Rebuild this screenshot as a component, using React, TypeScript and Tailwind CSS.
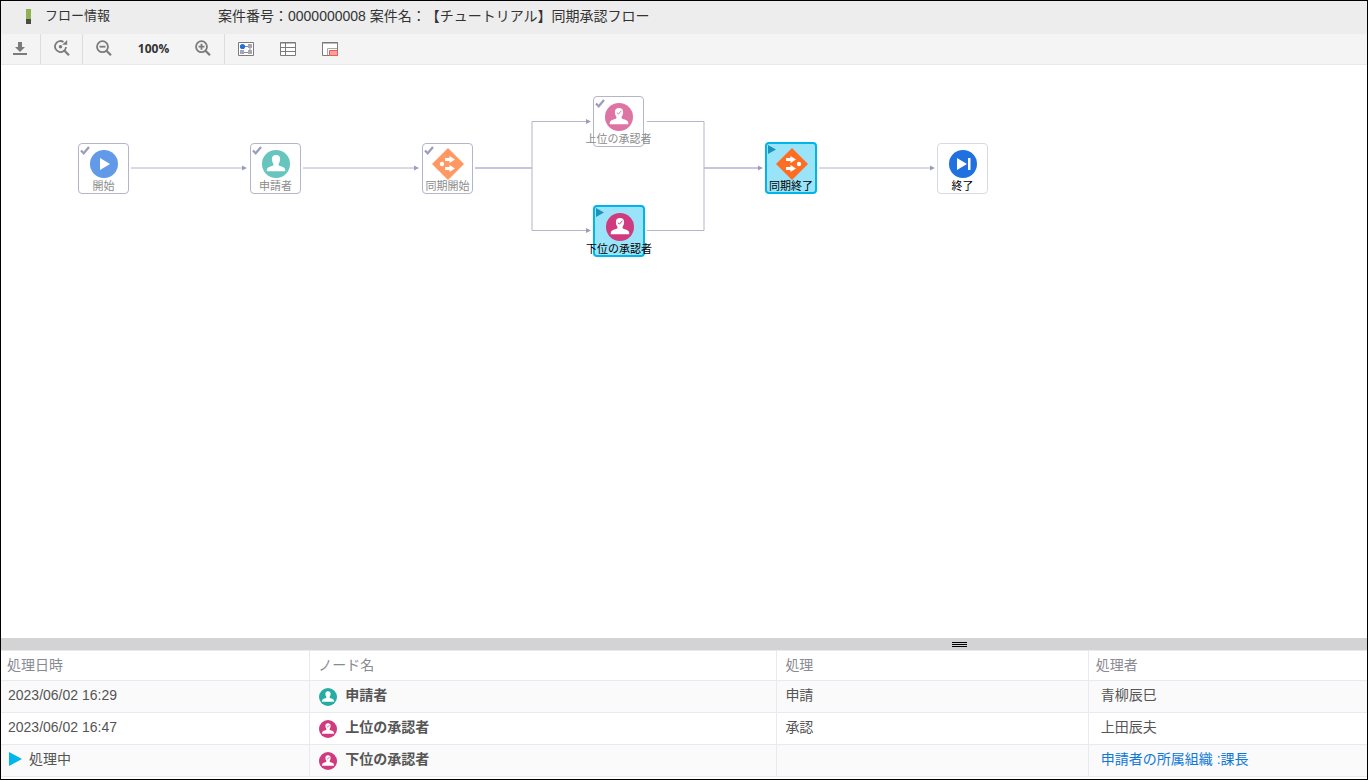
import React from "react";

type IconKind = "start" | "user" | "approver" | "split" | "join" | "end";
type NodeState = "done" | "active" | "waiting";

function Person({ check = false }: { check?: boolean }) {
  return (
    <>
      <path
        d="M14 5c2.700 0 4.100 1.500 4.100 4 0 2-.6 3.700-1.500 4.800v1.500c1.200 1 5 1.300 6.100 2.900.5.8.6 1.900.6 3.100H4.700c0-1.200.1-2.300.6-3.100 1.100-1.600 4.900-1.900 6.100-2.900v-1.500c-.9-1.100-1.500-2.800-1.500-4.800 0-2.500 1.400-4 4.100-4z"
        fill="#fff"
      />
      {check && <path d="M11.800 9.600l1.600 1.500 2.900-3.300" fill="none" stroke="#d03a7e" strokeWidth="1" />}
    </>
  );
}

function NodeIcon({ kind, className }: { kind: IconKind; className: string }) {
  return (
    <svg viewBox="0 0 28 28" className={className} aria-hidden="true">
      {kind === "start" && (
        <>
          <circle cx="14" cy="14" r="14" fill="#2070e0" />
          <path d="M10 8l10 6-10 6z" fill="#fff" />
        </>
      )}
      {kind === "user" && (
        <>
          <circle cx="14" cy="14" r="14" fill="#27aca4" />
          <Person />
        </>
      )}
      {kind === "approver" && (
        <>
          <circle cx="14" cy="14" r="14" fill="#d03a7e" />
          <Person check />
        </>
      )}
      {kind === "end" && (
        <>
          <circle cx="14" cy="14" r="14" fill="#2070e0" />
          <path d="M8 8l10 6-10 6zM19 8h2.500v12H19z" fill="#fff" />
        </>
      )}
    </svg>
  );
}

function BranchIcon({ join, className }: { join: boolean; className: string }) {
  return (
    <svg viewBox="0 0 32 32" className={className} aria-hidden="true">
      <path d="M16 0l16 16-16 16L0 16z" fill="#ff6d22" />
      <circle cx={join ? 23 : 10} cy="16" r="2.200" fill="#fff" />
      <g transform={join ? "translate(-3 0)" : "translate(0 0)"} fill="#fff">
        <path d="M13 10h4.500V8l5.500 3.500-5.500 3.500v-2H13z" />
        <path d="M13 19h4.500v-2l5.500 3.500-5.500 3.500v-2H13z" />
      </g>
    </svg>
  );
}

const boxStyles: Record<NodeState, string> = {
  done: "h-[51px] w-[51px] border border-[#b4b4cb] bg-white",
  active: "h-[52px] w-[52px] border-2 border-[#00b4ec] bg-[#9ae4f9]",
  waiting: "h-[51px] w-[51px] border border-[#d9d9e6] bg-white",
};

const iconStyles: Record<NodeState, string> = {
  done: "ml-px opacity-70",
  active: "ml-0.5",
  waiting: "ml-px",
};

interface FlowNodeProps {
  label: string;
  kind: IconKind;
  state: NodeState;
  place: string;
}

function FlowNode({ label, kind, state, place }: FlowNodeProps) {
  const branch = kind === "split" || kind === "join";
  return (
    <div className={`absolute flex flex-col items-center justify-end rounded-[4px] ${boxStyles[state]} ${place}`}>
      <div className={`flex h-8 w-8 items-center justify-center ${iconStyles[state]}`}>
        {branch ? (
          <BranchIcon join={kind === "join"} className="h-8 w-8" />
        ) : (
          <NodeIcon kind={kind} className="h-7 w-7" />
        )}
      </div>
      <span
        className={`text-[11px] leading-[13px] whitespace-nowrap ${state === "done" ? "text-[#8c8c8c]" : "text-black"} ${state === "active" ? "-mb-px" : ""}`}
      >
        {label}
      </span>
      {state === "done" && (
        <svg viewBox="0 0 10 9" className="absolute top-0.5 left-px h-[9px] w-[10px]" aria-hidden="true">
          <path d="M1 4.500l2.700 2.800L9 1" fill="none" stroke="#9c9cbd" strokeWidth="2.200" />
        </svg>
      )}
      {state === "active" && (
        <svg viewBox="0 0 8 9" className="absolute top-px left-px h-[9px] w-2" aria-hidden="true">
          <path d="M0 0l8 4.500L0 9z" fill="#1c93b8" />
        </svg>
      )}
    </div>
  );
}

const nodes: FlowNodeProps[] = [
  { label: "開始", kind: "start", state: "done", place: "top-[78px] left-[77px]" },
  { label: "申請者", kind: "user", state: "done", place: "top-[78px] left-[249px]" },
  { label: "同期開始", kind: "split", state: "done", place: "top-[78px] left-[421px]" },
  { label: "上位の承認者", kind: "approver", state: "done", place: "top-[31px] left-[592px]" },
  { label: "下位の承認者", kind: "approver", state: "active", place: "top-[140px] left-[592px]" },
  { label: "同期終了", kind: "join", state: "active", place: "top-[77px] left-[764px]" },
  { label: "終了", kind: "end", state: "waiting", place: "top-[78px] left-[936px]" },
];

function Connectors() {
  return (
    <svg width="1000" height="220" viewBox="0 0 1000 220" className="absolute top-0 left-0" aria-hidden="true">
      <g fill="none" stroke="#b4b4cd" strokeWidth="1">
        <path d="M130 103H244M302 103H416M818 103H932" />
        <path d="M474 103H531V56.500H588" />
        <path d="M474 103H531V165.500H588" />
        <path d="M646 56.500H703V103H760" />
        <path d="M646 165.500H703V103H760" />
      </g>
      <path
        d="M241 100.500l5 2.500-5 2.500zM413 100.500l5 2.500-5 2.500zM585 54l5 2.500-5 2.500zM585 163l5 2.500-5 2.500zM757 100.500l5 2.500-5 2.500zM929 100.500l5 2.500-5 2.500z"
        fill="#9c9cbd"
      />
    </svg>
  );
}

function ToolButton({ label, children }: { label: string; children: React.ReactNode }) {
  return (
    <button type="button" aria-label={label} className="flex h-full w-[42px] items-center justify-center text-[#7b7b7b]">
      {children}
    </button>
  );
}

function Magnifier({ children }: { children: React.ReactNode }) {
  return (
    <svg viewBox="0 1 18 18" className="h-[18px] w-[18px] shrink-0" fill="none" stroke="currentColor" strokeWidth="1.800" aria-hidden="true">
      {children}
      <path d="M11.500 11.700l4.500 4.500" strokeWidth="2.200" />
    </svg>
  );
}

function Toolbar() {
  return (
    <div role="toolbar" className="flex h-[31px] items-stretch border-b border-[#e9e9e9] bg-[#f4f4f4]">
      <div className="flex w-10 border-r border-[#dcdcdc] pr-px">
        <ToolButton label="ダウンロード">
          <svg viewBox="0 0 14 14" className="h-[14px] w-[14px]" fill="currentColor" aria-hidden="true">
            <path d="M5 0h4v5h3l-5 5-5-5h3zM0 11h14v2H0z" />
          </svg>
        </ToolButton>
      </div>
      <div className="flex w-[42px] border-r border-[#dcdcdc]">
        <ToolButton label="表示を戻す">
          <Magnifier>
            <path d="M10.500 2.900A5.500 5.500 0 1 0 13 8" />
            <path d="M9.200 5.800h5V1z" fill="currentColor" stroke="none" />
            <circle cx="7.500" cy="7.700" r="1.800" fill="currentColor" stroke="none" />
          </Magnifier>
        </ToolButton>
      </div>
      <div className="flex w-[142px] items-center border-r border-[#dcdcdc]">
        <ToolButton label="縮小">
          <Magnifier>
            <circle cx="7.500" cy="7.700" r="5.500" />
            <path d="M4.500 7.700h6" />
          </Magnifier>
        </ToolButton>
        <span className="w-[58px] shrink-0 text-center font-['Open_Sans',sans-serif] text-xs leading-4 font-bold text-[#333]">100%</span>
        <ToolButton label="拡大">
          <Magnifier>
            <circle cx="7.500" cy="7.700" r="5.500" />
            <path d="M4.500 7.700h6M7.500 4.700v6" />
          </Magnifier>
        </ToolButton>
      </div>
      <ToolButton label="フロー表示">
        <svg viewBox="0 0 16 14" className="h-[14px] w-4" aria-hidden="true">
          <path d="M.5.5h15v13H.5z" fill="#fff" stroke="#7b7b7b" />
          <path d="M4 4.500h8v6H4" fill="none" stroke="#8a8a9a" />
          <circle cx="4.500" cy="4.500" r="2.600" fill="#2070e0" />
          <path d="M10 2h4v4h-4zM10 8h4v4h-4zM2 8h4v4H2z" fill="#a5a5b5" />
        </svg>
      </ToolButton>
      <ToolButton label="一覧表示">
        <svg viewBox="0 0 16 14" className="h-[14px] w-4" fill="#fff" stroke="#7b7b7b" aria-hidden="true">
          <path d="M.5.5h15v13H.5zM5.500.5v13M0 1h16M.5 5.500h15M.5 9.500h15" />
        </svg>
      </ToolButton>
      <ToolButton label="全体図">
        <svg viewBox="0 0 16 14" className="h-[14px] w-4" aria-hidden="true">
          <path d="M.5.5h15v13H.5zM0 1h16" fill="#fff" stroke="#7b7b7b" />
          <path d="M5.500 13V6.500H15" fill="none" stroke="#aaa" />
          <path d="M7.500 8.500h8v5h-8z" fill="#ffa09c" stroke="#ee5a55" />
        </svg>
      </ToolButton>
    </div>
  );
}

interface HistoryRow {
  time: string;
  running?: boolean;
  node: string;
  kind: IconKind;
  action: string;
  person: string;
}

const rows: HistoryRow[] = [
  { time: "2023/06/02 16:29", node: "申請者", kind: "user", action: "申請", person: "青柳辰巳" },
  { time: "2023/06/02 16:47", node: "上位の承認者", kind: "approver", action: "承認", person: "上田辰夫" },
  { time: "処理中", running: true, node: "下位の承認者", kind: "approver", action: "", person: "申請者の所属組織 :課長" },
];

function HistoryTable() {
  return (
    <table className="w-full table-fixed border-collapse text-left text-sm leading-5 text-[#555]">
      <colgroup>
        <col className="w-[22.6%]" />
        <col className="w-[34.2%]" />
        <col className="w-[22.8%]" />
        <col />
      </colgroup>
      <thead>
        <tr className="h-[30px] border-y border-[#e9e9f3] text-[#8a8a93]">
          <th scope="col" className="border-r border-[#e9e9f3] px-1.5 pb-0.5 font-normal">処理日時</th>
          <th scope="col" className="border-r border-[#e9e9f3] px-2 pb-0.5 font-normal">ノード名</th>
          <th scope="col" className="border-r border-[#e9e9f3] px-2 pb-0.5 font-normal">処理</th>
          <th scope="col" className="px-[7px] pb-0.5 font-normal">処理者</th>
        </tr>
      </thead>
      <tbody>
        {rows.map((row) => (
          <tr key={row.node} className="h-8 border-b border-[#e9e9f3] odd:bg-[#fafafa]">
            <td className="border-r border-[#e9e9f3] px-[7px] pb-1">
              <span className="flex items-center gap-[7px]">
                {row.running && (
                  <svg viewBox="0 0 14 14" className="h-[14px] w-[14px]" aria-hidden="true">
                    <path d="M1 0l13 7-13 7z" fill="#00b4ec" />
                  </svg>
                )}
                {row.time}
              </span>
            </td>
            <td className="border-r border-[#e9e9f3] px-[9px] font-bold">
              <span className="flex items-center gap-2">
                <NodeIcon kind={row.kind} className="h-[18px] w-[18px]" />
                <span className="pb-1">{row.node}</span>
              </span>
            </td>
            <td className="border-r border-[#e9e9f3] px-2 pb-1">{row.action}</td>
            <td className="px-3 pb-1">
              {row.running ? (
                <a href="#assignee" className="text-[#0d78d8]">{row.person}</a>
              ) : (
                row.person
              )}
            </td>
          </tr>
        ))}
      </tbody>
    </table>
  );
}

export default function App() {
  return (
    <div className="flex h-screen flex-col overflow-hidden border border-black bg-white font-['Liberation_Sans','Noto_Sans_CJK_JP',sans-serif] [text-spacing-trim:space-all]">
      <header className="flex h-[33px] shrink-0 items-center bg-[#ededed] pb-0.5 text-[#333]">
        <span className="ml-[25px] flex h-[15px] w-[5px] flex-col bg-[#8db450]">
          <span className="mt-auto h-[5px] bg-[#4a4d40]" />
        </span>
        <h1 className="ml-[14px] w-[173px] pb-0.5 text-[13px] leading-5">フロー情報</h1>
        <p className="pb-0.5 text-sm leading-5">案件番号：0000000008 案件名：【チュートリアル】同期承認フロー</p>
      </header>
      <Toolbar />
      <main className="relative min-h-0 flex-1 overflow-hidden">
        <Connectors />
        {nodes.map((node) => (
          <FlowNode key={node.label} {...node} />
        ))}
      </main>
      <div role="separator" aria-orientation="horizontal" className="flex h-3 shrink-0 items-center bg-[#d3d3d3]">
        <svg viewBox="0 0 15 5" className="ml-[69.6%] h-[5px] w-[15px]" aria-hidden="true">
          <path d="M0 .5h15M0 2.500h15M0 4.500h15" stroke="#000" />
        </svg>
      </div>
      <section className="shrink-0 pb-0.5">
        <HistoryTable />
      </section>
    </div>
  );
}
